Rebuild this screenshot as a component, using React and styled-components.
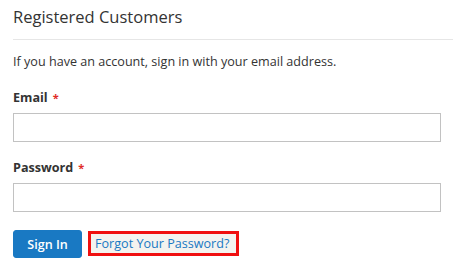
import React from 'react'
import styled, { createGlobalStyle } from 'styled-components'

const Global = createGlobalStyle`
  html, body { margin: 0; padding: 0; background: #fff; }
  body { font-family: "Open Sans", "Liberation Sans", sans-serif; color: #333; }
`

const Block = styled.div`
  padding: 0 0 0 13px;
`

const Title = styled.div`
  font-size: 16.5px;
  font-weight: 400;
  line-height: 22px;
  padding-top: 6px;
  padding-bottom: 11px;
  border-bottom: 1px solid #e6e6e6;
  color: #333;
`

const Form = styled.form`
  padding-right: 12px;
  display: flex;
  flex-direction: column;
`

const Intro = styled.p`
  margin: 13px 0 0;
  font-size: 12.6px;
  line-height: 18px;
`

const Field = styled.div`
  display: flex;
  flex-direction: column;
  margin-top: ${p => p.first ? '18px' : '17px'};
`

const Label = styled.label`
  font-size: 12.6px;
  font-weight: 700;
  line-height: 18px;
  margin-bottom: 6px;
  span { color: #e02b27; font-size: 11px; margin-left: 5px; }
`

const Input = styled.input`
  box-sizing: border-box;
  height: 29px;
  border: 1px solid #c2c2c2;
  background: #fff;
  width: 100%;
  margin: 0;
`

const Actions = styled.div`
  display: flex;
  align-items: flex-start;
  gap: 6px;
  margin-top: 18px;
`

const Button = styled.button`
  background: #1979c3;
  border: 1px solid #1979c3;
  color: #fff;
  font-family: inherit;
  font-weight: 600;
  font-size: 12.6px;
  height: 28px;
  width: 69px;
  border-radius: 3px;
  padding: 0;
`

const ForgotBox = styled.a`
  box-sizing: border-box;
  height: 25px;
  width: 151px;
  border: 3px solid #f01010;
  background: #f4f3ef;
  color: #1979c3;
  font-size: 12.6px;
  line-height: 19px;
  text-decoration: none;
  padding-left: 4px;
  margin-top: 1px;
`

export default function App() {
  return (
    <>
      <Global />
      <Block>
        <Title>Registered Customers</Title>
        <Form>
          <Intro>If you have an account, sign in with your email address.</Intro>
          <Field first>
            <Label>Email<span>*</span></Label>
            <Input type="email" />
          </Field>
          <Field>
            <Label>Password<span>*</span></Label>
            <Input type="password" />
          </Field>
          <Actions>
            <Button type="button">Sign In</Button>
            <ForgotBox href="#">Forgot Your Password?</ForgotBox>
          </Actions>
        </Form>
      </Block>
    </>
  )
}
